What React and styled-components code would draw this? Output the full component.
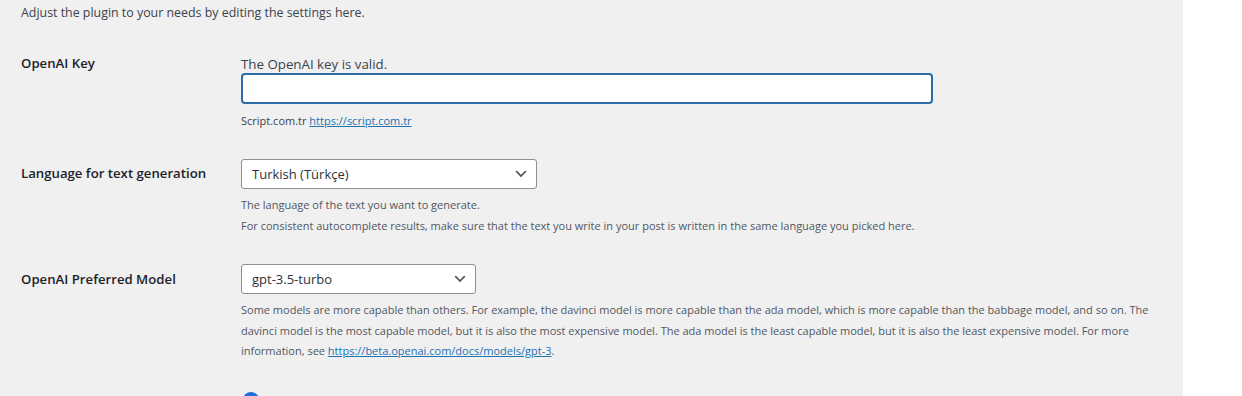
import React from "react";
import styled, { createGlobalStyle } from "styled-components";

const GlobalStyle = createGlobalStyle`
  html, body {
    margin: 0;
    padding: 0;
  }
  body {
    background: #ffffff;
    font-family: "Open Sans", "Noto Sans", sans-serif;
    color: #3c434a;
  }
`;

const Page = styled.div`
  display: flex;
  height: 396px;
  overflow: hidden;
`;

const Content = styled.div`
  width: 1183px;
  flex-shrink: 0;
  background: #f0f0f1;
  padding: 3px 30px 0 21px;
  box-sizing: border-box;
`;

const Side = styled.div`
  flex: 1;
  background: #ffffff;
`;

const Intro = styled.p`
  margin: 0 0 17px;
  font-size: 12.4px;
  line-height: 20px;
  color: #3c434a;
`;

const Row = styled.div`
  display: grid;
  grid-template-columns: 220px 1fr;
  padding-bottom: 13px;
`;

const Label = styled.div`
  padding-top: ${(p) => p.$top}px;
  font-size: 13.2px;
  font-weight: 600;
  line-height: 18px;
  color: #1d2327;
`;

const Field = styled.div`
  padding-top: ${(p) => p.$top || 15}px;
`;

const Status = styled.div`
  font-size: 13.3px;
  line-height: 18px;
  color: #3c434a;
`;

const KeyInput = styled.input`
  display: block;
  width: 692px;
  height: 31px;
  box-sizing: border-box;
  border: 2px solid #2a6ca5;
  border-radius: 4px;
  background: #ffffff;
  outline: none;
  padding: 0 8px;
  font: inherit;
  font-size: 13px;
`;

const Desc = styled.p`
  margin: ${(p) => p.$mt || 7}px 0 0;
  font-size: 11px;
  line-height: ${(p) => p.$lh || 20}px;
  color: ${(p) => (p.$dark ? "#3c434a" : "#50575e")};
  white-space: nowrap;
`;

const Link = styled.a`
  color: #2271b1;
  text-decoration: underline;
`;

const SelectWrap = styled.div`
  position: relative;
  width: ${(p) => p.$w}px;
  height: 30px;
`;

const Select = styled.select`
  appearance: none;
  -webkit-appearance: none;
  width: 100%;
  height: 30px;
  box-sizing: border-box;
  border: 1px solid #8c8f94;
  border-radius: 3px;
  background: #ffffff;
  padding: 0 24px 0 10px;
  font-family: inherit;
  font-size: 13px;
  color: #2c3338;
  outline: none;
`;

const Chevron = styled.svg`
  position: absolute;
  right: 8px;
  top: 7px;
  width: 16px;
  height: 16px;
  pointer-events: none;
`;

const Dot = styled.span`
  display: block;
  width: 16px;
  height: 16px;
  margin-left: 2px;
  border-radius: 50%;
  background: #1b6fd8;
`;

function Dropdown({ width, value, options }) {
  return (
    <SelectWrap $w={width}>
      <Select defaultValue={value}>
        {options.map((o) => (
          <option key={o}>{o}</option>
        ))}
      </Select>
      <Chevron viewBox="0 0 20 20">
        <path d="M5 6l5 5 5-5 2 1-7 7-7-7 2-1z" fill="#50575e" />
      </Chevron>
    </SelectWrap>
  );
}

export default function App() {
  return (
    <>
      <GlobalStyle />
      <Page>
        <Content>
          <Intro>Adjust the plugin to your needs by editing the settings here.</Intro>

          <Row>
            <Label $top={14}>OpenAI Key</Label>
            <Field>
              <Status>The OpenAI key is valid.</Status>
              <KeyInput type="text" />
              <Desc $dark>
                Script.com.tr <Link href="#">https://script.com.tr</Link>
              </Desc>
            </Field>
          </Row>

          <Row>
            <Label $top={20}>Language for text generation</Label>
            <Field>
              <Dropdown
                width={296}
                value="Turkish (Türkçe)"
                options={["English", "Turkish (Türkçe)", "German (Deutsch)"]}
              />
              <Desc $mt={5} $lh={21}>
                The language of the text you want to generate.
                <br />
                For consistent autocomplete results, make sure that the text you write in your post is written in the same language you picked here.
              </Desc>
            </Field>
          </Row>

          <Row>
            <Label $top={21}>OpenAI Preferred Model</Label>
            <Field>
              <Dropdown
                width={235}
                value="gpt-3.5-turbo"
                options={["gpt-3.5-turbo", "text-davinci-003", "text-curie-001"]}
              />
              <Desc $mt={6} $lh={20.5}>
                Some models are more capable than others. For example, the davinci model is more capable than the ada model, which is more capable than the babbage model, and so on. The
                <br />
                davinci model is the most capable model, but it is also the most expensive model. The ada model is the least capable model, but it is also the least expensive model. For more
                <br />
                information, see <Link href="#">https://beta.openai.com/docs/models/gpt-3</Link>.
              </Desc>
            </Field>
          </Row>

          <Row>
            <Label $top={17} />
            <Field $top={17}>
              <Dot />
            </Field>
          </Row>
        </Content>
        <Side />
      </Page>
    </>
  );
}
